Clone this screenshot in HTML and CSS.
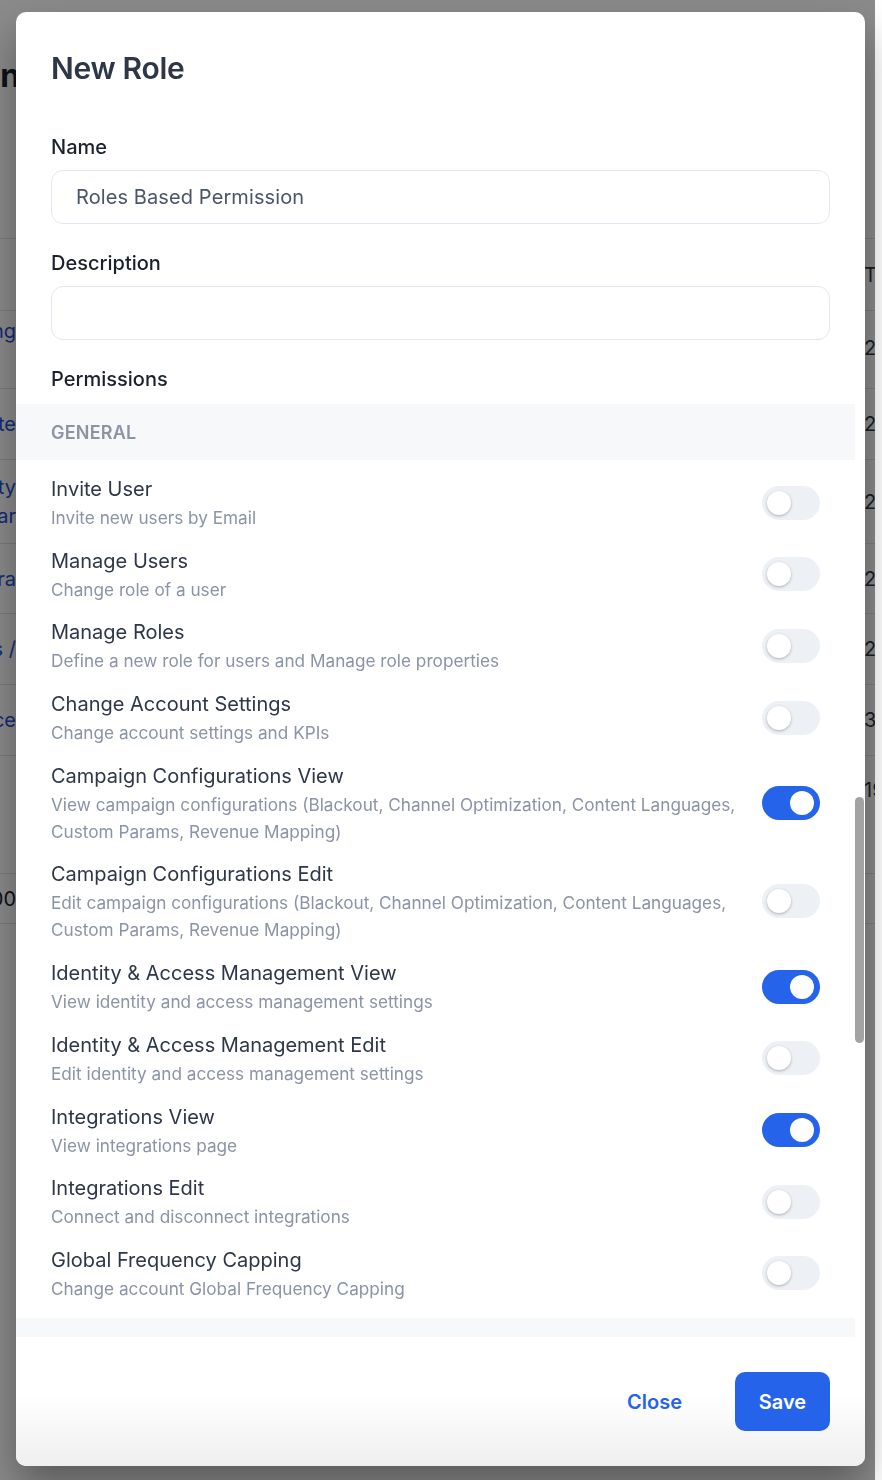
FILE: index.html
```html
<!DOCTYPE html>
<html lang="en">
<head>
<meta charset="utf-8">
<title>New Role</title>
<link rel="stylesheet" href="styles.css">
</head>
<body>
<div class="page">
  <div class="page-top"></div>
  <h1 class="page-title">Admin</h1>
  <div class="table">
    <div class="trow thead"><div class="lcell"></div><div class="mid"></div><div class="rcell">Total</div></div>
    <div class="trow r78"><div class="lcell link">Targeting</div><div class="mid"></div><div class="rcell">2551</div></div>
    <div class="trow r71"><div class="lcell link">Delete</div><div class="mid"></div><div class="rcell">2512</div></div>
    <div class="trow r84"><div class="lcell link two">Quality<br>Solar</div><div class="mid"></div><div class="rcell">2019</div></div>
    <div class="trow r70"><div class="lcell link">Camera</div><div class="mid"></div><div class="rcell">2021</div></div>
    <div class="trow r71"><div class="lcell link">Reports /</div><div class="mid"></div><div class="rcell">2533</div></div>
    <div class="trow r71"><div class="lcell link">Finance</div><div class="mid"></div><div class="rcell">3,421</div></div>
    <div class="trow r118"><div class="lcell"></div><div class="mid"></div><div class="rcell">19</div></div>
    <div class="trow r50"><div class="lcell plain">100</div><div class="mid"></div><div class="rcell"></div></div>
    <div class="trow r47"><div class="lcell"></div><div class="mid"></div><div class="rcell"></div></div>
  </div>
</div>

<div class="overlay">
  <div class="modal">
    <div class="modal-body">
      <div class="head">
        <h2 class="modal-title">New Role</h2>
        <label class="field-label">Name</label>
        <div class="input">Roles Based Permission</div>
        <label class="field-label">Description</label>
        <div class="input"></div>
        <div class="field-label perm-label">Permissions</div>
      </div>

      <div class="section-band">GENERAL</div>

      <div class="perm-list">
        <div class="perm">
          <div class="perm-text"><div class="perm-title">Invite User</div><div class="perm-desc">Invite new users by Email</div></div>
          <span class="toggle"><span class="knob"></span></span>
        </div>
        <div class="perm">
          <div class="perm-text"><div class="perm-title">Manage Users</div><div class="perm-desc">Change role of a user</div></div>
          <span class="toggle"><span class="knob"></span></span>
        </div>
        <div class="perm">
          <div class="perm-text"><div class="perm-title">Manage Roles</div><div class="perm-desc">Define a new role for users and Manage role properties</div></div>
          <span class="toggle"><span class="knob"></span></span>
        </div>
        <div class="perm">
          <div class="perm-text"><div class="perm-title">Change Account Settings</div><div class="perm-desc">Change account settings and KPIs</div></div>
          <span class="toggle"><span class="knob"></span></span>
        </div>
        <div class="perm">
          <div class="perm-text"><div class="perm-title">Campaign Configurations View</div><div class="perm-desc">View campaign configurations (Blackout, Channel Optimization, Content Languages, Custom Params, Revenue Mapping)</div></div>
          <span class="toggle on"><span class="knob"></span></span>
        </div>
        <div class="perm">
          <div class="perm-text"><div class="perm-title">Campaign Configurations Edit</div><div class="perm-desc">Edit campaign configurations (Blackout, Channel Optimization, Content Languages, Custom Params, Revenue Mapping)</div></div>
          <span class="toggle"><span class="knob"></span></span>
        </div>
        <div class="perm">
          <div class="perm-text"><div class="perm-title">Identity &amp; Access Management View</div><div class="perm-desc">View identity and access management settings</div></div>
          <span class="toggle on"><span class="knob"></span></span>
        </div>
        <div class="perm">
          <div class="perm-text"><div class="perm-title">Identity &amp; Access Management Edit</div><div class="perm-desc">Edit identity and access management settings</div></div>
          <span class="toggle"><span class="knob"></span></span>
        </div>
        <div class="perm">
          <div class="perm-text"><div class="perm-title">Integrations View</div><div class="perm-desc">View integrations page</div></div>
          <span class="toggle on"><span class="knob"></span></span>
        </div>
        <div class="perm">
          <div class="perm-text"><div class="perm-title">Integrations Edit</div><div class="perm-desc">Connect and disconnect integrations</div></div>
          <span class="toggle"><span class="knob"></span></span>
        </div>
        <div class="perm">
          <div class="perm-text"><div class="perm-title">Global Frequency Capping</div><div class="perm-desc">Change account Global Frequency Capping</div></div>
          <span class="toggle"><span class="knob"></span></span>
        </div>
      </div>

      <div class="section-band"></div>
    </div>
    <div class="scroll-thumb"></div>
    <div class="modal-footer">
      <button class="btn-close">Close</button>
      <button class="btn-save">Save</button>
    </div>
  </div>
</div>
</body>
</html>
```

FILE: styles.css
```css
html, body {
  margin: 0;
  padding: 0;
  background: #ffffff;
}

body {
  font-family: Inter, "Liberation Sans", sans-serif;
  width: 882px;
  height: 1480px;
  overflow: hidden;
}

/* ---------- underlying page ---------- */
.page {
  width: 875px;
  height: 1480px;
  background: #ffffff;
  overflow: hidden;
}

.page-top {
  height: 12px;
}

.page-title {
  margin: 44px 0 0 -81px;
  font-size: 32px;
  font-weight: 700;
  color: #1a202c;
  line-height: 40px;
  height: 182px;
}

.table {
  display: flex;
  flex-direction: column;
}

.trow {
  display: grid;
  grid-template-columns: 16px 848px 11px;
  border-top: 1px solid #dfe3e8;
  font-size: 20px;
  color: #2d3748;
}

.thead { height: 71px; align-items: center; }
.r78 { height: 77px; align-items: start; }
.r78 .lcell, .r78 .rcell { padding-top: 8px; }
.r78 .rcell { padding-top: 25px; }
.r71 { height: 70px; align-items: center; }
.r70 { height: 69px; align-items: center; }
.r84 { height: 83px; align-items: center; }
.r118 { height: 117px; align-items: start; }
.r118 .rcell { padding-top: 22px; }
.r50 { height: 49px; align-items: center; }
.r47 { height: 46px; }

.lcell {
  display: flex;
  justify-content: flex-end;
  overflow: hidden;
  white-space: nowrap;
}

.lcell.two {
  line-height: 29px;
  text-align: right;
}

.link { color: #1e4fd6; }
.plain { color: #1a202c; }

.rcell {
  overflow: hidden;
  white-space: nowrap;
}

/* ---------- overlay & modal ---------- */
.overlay {
  position: fixed;
  top: 0;
  left: 0;
  width: 875px;
  height: 1480px;
  background: rgba(0, 0, 0, 0.46);
  box-sizing: border-box;
  padding: 12px 10px 14px 16px;
}

.modal {
  position: relative;
  width: 849px;
  height: 1454px;
  background: #ffffff;
  border-radius: 10px;
  display: flex;
  flex-direction: column;
  overflow: hidden;
  box-shadow: 0 20px 40px rgba(0, 0, 0, 0.35);
}

.modal-body {
  flex: 1;
  overflow: hidden;
  margin-right: 10px;
}

.head {
  padding: 38px 25px 0 35px;
  display: flex;
  flex-direction: column;
}

.modal-title {
  margin: 0;
  font-size: 30px;
  line-height: 36px;
  font-weight: 600;
  color: #2d3748;
  letter-spacing: -0.3px;
}

.field-label {
  display: block;
  font-size: 20px;
  line-height: 28px;
  font-weight: 500;
  color: #1a202c;
  margin-top: 25px;
  margin-bottom: 9px;
}

.modal-title + .field-label {
  margin-top: 47px;
}

.perm-label {
  margin-bottom: 11px;
}

.input {
  height: 54px;
  box-sizing: border-box;
  border: 1px solid #e2e8f0;
  border-radius: 12px;
  padding: 0 24px;
  display: flex;
  align-items: center;
  font-size: 20px;
  color: #4a5568;
  letter-spacing: 0.1px;
}

.section-band {
  height: 56px;
  background: #f7f8fa;
  display: flex;
  align-items: center;
  padding-left: 35px;
  font-size: 18px;
  font-weight: 600;
  color: #8a94a6;
  letter-spacing: 0.2px;
}

.perm-list {
  display: flex;
  flex-direction: column;
  gap: 14.7px;
  padding: 14px 35px 16px 35px;
}

.perm {
  display: flex;
  align-items: center;
  gap: 16px;
}

.perm-text {
  flex: 1;
}

.perm-title {
  font-size: 20px;
  line-height: 30px;
  color: #2d3748;
}

.perm-desc {
  font-size: 17.2px;
  line-height: 27px;
  color: #8a94a6;
}

.toggle {
  flex: none;
  position: relative;
  width: 58px;
  height: 34px;
  border-radius: 17px;
  background: #edf0f4;
}

.toggle .knob {
  position: absolute;
  top: 5px;
  left: 5px;
  width: 24px;
  height: 24px;
  border-radius: 50%;
  background: #ffffff;
  box-shadow: 0 1px 3px rgba(0, 0, 0, 0.28);
}

.toggle.on {
  background: #2563eb;
}

.toggle.on .knob {
  left: 28px;
  box-shadow: none;
}

.scroll-thumb {
  position: absolute;
  right: 1px;
  top: 785px;
  width: 9px;
  height: 246px;
  border-radius: 5px;
  background: #a3a3a3;
}

.modal-footer {
  height: 129px;
  flex: none;
  display: flex;
  align-items: center;
  justify-content: flex-end;
  gap: 29px;
  padding-right: 35px;
  background: linear-gradient(#ffffff 45%, #efefef 100%);
}

.btn-close,
.btn-save {
  font-family: Inter, "Liberation Sans", sans-serif;
  font-size: 20px;
  font-weight: 600;
  border: none;
  cursor: pointer;
  height: 59px;
  border-radius: 10px;
}

.btn-close {
  background: transparent;
  color: #2563eb;
  padding: 0 24px;
}

.btn-save {
  background: #2563eb;
  color: #ffffff;
  width: 95px;
}
```
